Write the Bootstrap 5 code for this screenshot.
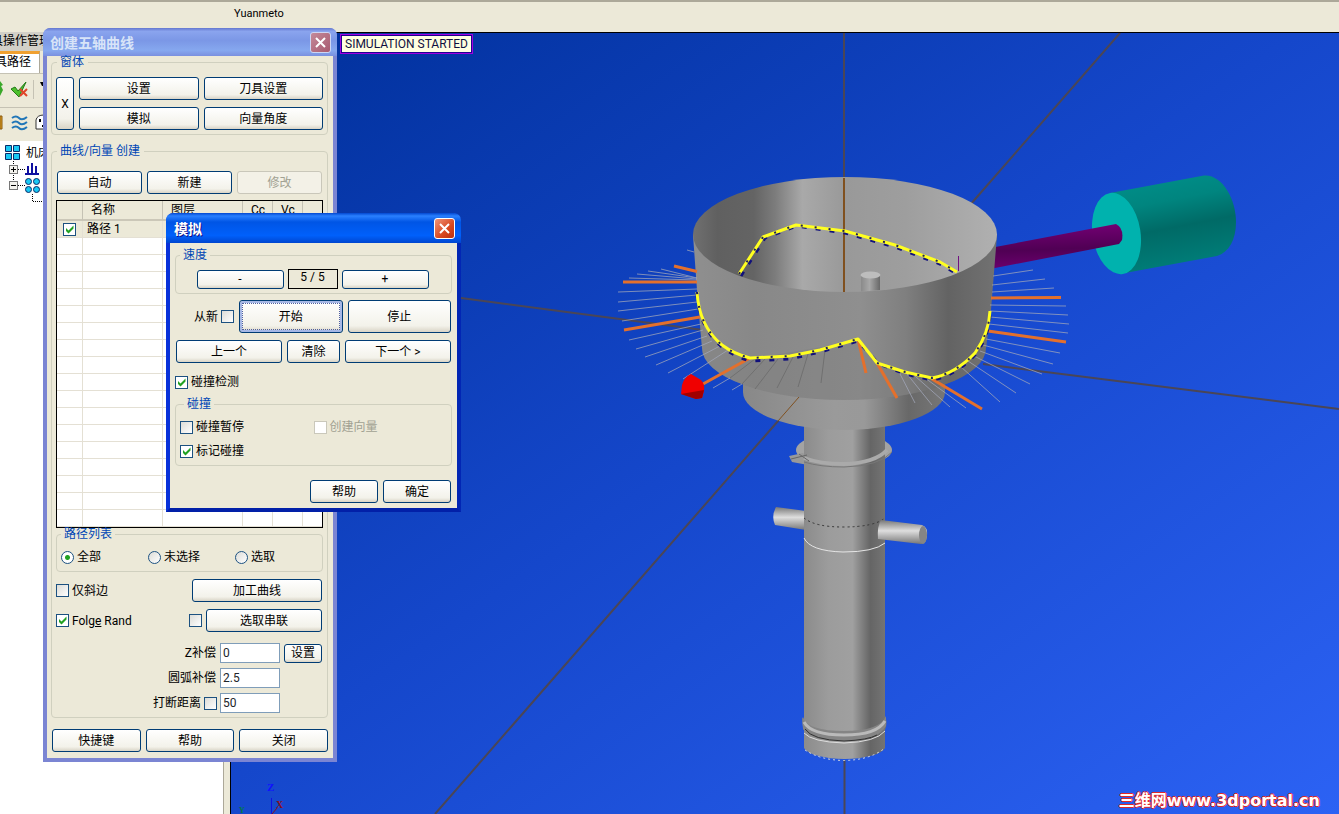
<!DOCTYPE html>
<html lang="zh-CN">
<head>
<meta charset="utf-8">
<meta name="viewport" content="width=device-width, initial-scale=1">
<title>创建五轴曲线</title>
<link href="https://cdn.jsdelivr.net/npm/bootstrap@5.3.0/dist/css/bootstrap.min.css" rel="stylesheet">
<style>
:root{--face:#ece9d8;--ink:#000;--edge:#003c74}
body{font-family:Roboto,"Noto Sans CJK SC",sans-serif;font-size:12px;line-height:16px;color:var(--ink);background:var(--face)}
.topbar{height:32px;border-top:2px solid #aca899;background:var(--face);padding:4px 0 0 234px;font-size:11px}
.side{width:224px;background:#fff;border-right:1px solid #aca899}
.side-title{height:19px;background:#d2d0c8;overflow:hidden;white-space:nowrap;padding-top:1px}
.side-title span{margin-left:-9px}
.side-tabs{height:22px;background:var(--face)}
.side-tab{width:40px;border-top:3px solid #f0a030;border-right:1px solid #aca899;background:#fff;overflow:hidden;white-space:nowrap;color:#000;text-decoration:none}
.side-tab span{margin-left:-5px}
.tools{background:var(--face);border-top:1px solid #c5c2b4;height:34px;overflow:hidden}
.tree{list-style:none}
.splitter{width:6px;background:var(--face)}
.view{border-left:1px solid #000;border-top:1px solid #000;background:linear-gradient(145deg,#00309a 0%,#1547cb 48%,#2c62f4 100%);overflow:hidden}
.status{top:1px;left:109px;border:1px solid #a000e0;box-shadow:inset 0 0 0 1px #200090;background:#ffffe1;padding:1px 4px;color:#101040}
.stamp{right:19px;bottom:4px;font-family:"DejaVu Sans","Noto Sans CJK SC",sans-serif;font-size:16px;line-height:18px;font-weight:700;color:#fff;text-decoration:none;text-shadow:1px 0 #e02828,-1px 0 #e02828,0 1px #e02828,0 -1px #e02828}
.win{background:var(--face);border-radius:8px 8px 0 0}
.win-head{font-weight:700;font-size:14px;line-height:20px;border-radius:7px 7px 0 0}
.win-head h1{font-size:14px;line-height:20px;font-weight:700}
.win-a{left:43px;top:28px;width:294px;border:4px solid #7b85d3;border-top:0}
.win-a .win-head{margin:0 -4px;height:28px;padding:1px 6px 0 7px;background:linear-gradient(#6477cf,#8aa4ee 12%,#7b97e6 45%,#86a8ef 80%,#7a90df);color:#d8e4f8}
.win-a .win-body{padding:0 5px 6px 4px}
.win-b{left:166px;top:213px;width:295px;border:4px solid #0831d9;border-top:0;border-right-color:#0226b4;border-bottom-color:#0220a8}
.win-b .win-head{margin:0 -4px;height:30px;padding:1px 6px 0 8px;background:linear-gradient(#0348d0,#2a80ff 10%,#0055e5 30%,#0060fb 75%,#0046cf);color:#fff;text-shadow:1px 1px #0f1089}
.win-b .win-body{padding:6px 5px 5px}
.x-btn{width:21px;height:21px;padding:0;border:1px solid #fff;border-radius:3px;background:linear-gradient(135deg,#f0957a,#d84820 60%,#b83010);display:flex;align-items:center;justify-content:center}
.win-a .x-btn{background:linear-gradient(135deg,#c48a9a,#a85a70);border-color:#ccd6f4}
.xp{--bs-btn-padding-y:0;--bs-btn-padding-x:0;font-size:12px;line-height:16px;min-height:23px;border:1px solid var(--edge);border-radius:3px;background:linear-gradient(#fff,#f3f2ea 80%,#d9d4c6);color:#000}
.xp:hover{border-color:var(--edge);color:#000;background:#fbfaf4}
.xp:disabled{border-color:#c9c7ba;background:#f3f1e7;color:#a1a192;opacity:1}
.xp-low{min-height:19px}
.xp-tall{min-height:33px}
.xp-focus{box-shadow:inset 0 0 0 2px #a6b8e6;outline:1px dotted #5060a0;outline-offset:-4px}
.grp{border:1px solid #d0d0bf;border-radius:4px;min-width:0}
.grp>legend{float:none;width:auto;font-size:12px;line-height:12px;margin:0 0 0 4px;padding:0 3px;color:#0046b5}
.grp.outer-grp>legend{margin-left:1px;padding:0 4px 0 3px}
.g5{gap:5px}.g4{gap:4px}.g3{gap:3px}.g7{gap:7px}
.form-check-input.tick{width:13px;height:13px;margin:0;flex:none;border:1px solid #1c5180;border-radius:0;background-color:#fff;background-image:linear-gradient(135deg,#dcdcd7,#fff)}
.form-check-input.tick:checked{background-color:#fff;border-color:#1c5180;background-size:11px 11px;background-image:url("data:image/svg+xml,%3Csvg xmlns='http://www.w3.org/2000/svg' viewBox='0 0 11 11'%3E%3Cpath d='M2 4v3l2.500 2.500 5-5v-3l-5 5z' fill='%2321a121'/%3E%3C/svg%3E")}
.form-check-input.tick:disabled{border-color:#cac8bb;background:#fff;opacity:1}
.form-check-input.dot{width:13px;height:13px;margin:0;flex:none;border:1px solid #1c5180;background-color:#fff;background-image:linear-gradient(135deg,#dcdcd7,#fff)}
.form-check-input.dot:checked{background-color:#fff;border-color:#1c5180;background-image:radial-gradient(circle,#21a121 0 2px,#fff 3px)}
.off{color:#a1a192}
.fld{width:60px;height:20px;border:1px solid #7f9db9;border-radius:0;padding:0 2px;font-size:12px;line-height:16px;min-height:0}
.paths{table-layout:fixed;border:1px solid #000;border-collapse:separate;border-spacing:0;background:#fff}
.paths th{height:20px;background:var(--face);font-weight:400;padding:0 0 0 8px;border-bottom:2px solid #cbc7b8;border-right:1px solid #c5c2b4;overflow:hidden;white-space:nowrap;line-height:16px}
.paths th:last-child,.paths td:last-child{border-right:0}
.paths td{height:17px;padding:0 0 0 4px;border-right:1px solid #e4e0d4;border-bottom:1px solid #e4e0d4;line-height:16px}
.paths .picked td{background:var(--face)}
.path-tick{margin-left:2px !important;display:block}
.speed{border:1px solid #000;width:50px;height:20px;line-height:15px}
.x-tall{width:18px}
.win-row{padding:9px 0 0}
.win-grid{display:grid;grid-template-columns:1fr 1fr;gap:7px 5px}
.win-grid>.col{width:auto}
.create{margin-top:10px}
.auto-row{padding:14px 1px 6px}
.radios{display:grid;grid-template-columns:87px 87px 1fr;padding:9px 4px 6px}
.opts{padding:7px 1px 0 0}
.curve-btn{width:130px}.chain-btn{width:116px}.set-btn{width:38px}
.offsets{padding:11px 1px 0 0}
.short{padding-right:42px}
.foot{padding:11px 0 0 1px}
.step-btn{width:87px}
.speed-row{padding:8px 2px 0 0}
.again{width:59px}
.run-row{padding:6px 1px 0 0}
.run-row .flex-fill,.nav-row .flex-fill{flex-basis:0 !important}
.nav-row{padding:7px 1px 0}
.clear-btn{width:53px}
.detect{padding-top:11px}
.hit{margin-top:8px;padding:9px 4px 6px}
.end-row{padding:14px 1px 0}
.end-btn{width:68px}
</style>
</head>
<body class="d-flex flex-column min-vh-100 overflow-hidden position-relative">
<header class="topbar">Yuanmeto</header>

<main class="d-flex flex-grow-1">
  <aside class="side flex-shrink-0">
    <div class="side-title"><span>具操作管理</span></div>
    <nav class="side-tabs d-flex"><a class="side-tab" href="#"><span>具路径</span></a></nav>
    <div class="tools">
      <svg width="44" height="32" viewBox="0 75 44 32"><path d="M0 82l3 4-2 1 2 4-3 6z" fill="#39a829"/><path d="M11 90l4-2 3 4 8-9-7 15z" fill="#4cc02c" stroke="#237a18"/><path d="M20 90l7 7m0-7l-7 7" stroke="#e04428" stroke-width="2"/><path d="M33.500 81v19" stroke="#c5c2b4"/><path d="M40 83h4v4h-2z"/></svg>
    </div>
    <div class="tools">
      <svg width="44" height="32" viewBox="0 107 44 32"><path d="M0 115h2v13h-2z" fill="#e0a020" stroke="#8a5a10"/><path d="M12 117q4-3 7 0t8-1M12 122q4-3 7 0t8-1M12 127q4-3 7 0t8-1" fill="none" stroke="#2277b8" stroke-width="2"/><path d="M36 128v-9q1-5 8-5v14z" fill="#fff" stroke="#333"/><path d="M39 118h2v3h-2zM42 124h2v2h-2z"/></svg>
    </div>
    <ul class="tree m-0 px-0 pt-1">
      <li class="d-flex align-items-center"><svg width="26" height="16" viewBox="0 144 26 16"><path d="M5.500 144.500h6v6h-6zM13.500 144.500h6v6h-6zM5.500 152.500h6v6h-6zM13.500 152.500h6v6h-6z" fill="#19c8f4" stroke="#082a68"/></svg>机床</li>
      <li class="d-flex"><svg width="43" height="16" viewBox="0 160 43 16"><path d="M13.500 160v16M18 168.500h7" stroke="#000" stroke-dasharray="1 1"/><rect x="9.500" y="164.500" width="8" height="8" fill="#f4f3ee" stroke="#777"/><path d="M11 168.500h5M13.500 166v5" stroke="#000"/><path d="M25 173h14M28 165v7M32 162v10M36 165v7" stroke="#1010a0" stroke-width="2"/></svg></li>
      <li class="d-flex"><svg width="43" height="26" viewBox="0 176 43 26"><path d="M13.500 176v4M18 184.500h7M32.500 193v7.500H43" fill="none" stroke="#000" stroke-dasharray="1 1"/><rect x="9.500" y="180.500" width="8" height="8" fill="#f4f3ee" stroke="#777"/><path d="M11 184.500h5" stroke="#000"/><g fill="#19c8f4" stroke="#082a68"><circle cx="28.500" cy="180.500" r="3"/><circle cx="36.500" cy="180.500" r="3"/><circle cx="28.500" cy="188.500" r="3"/><circle cx="36.500" cy="188.500" r="3"/></g></svg></li>
    </ul>
  </aside>
  <div class="splitter flex-shrink-0"></div>

  <section class="view position-relative flex-grow-1">
    <svg class="position-absolute top-0 start-0 w-100 h-100" viewBox="231 33 1108 781" preserveAspectRatio="xMidYMid slice" aria-label="3D">
      <defs>
        <linearGradient id="inner" gradientUnits="userSpaceOnUse" x1="693" x2="997" y1="0" y2="0"><stop offset="0" stop-color="#707070"/><stop offset=".08" stop-color="#606060"/><stop offset=".2" stop-color="#646464"/><stop offset=".27" stop-color="#7c7c7c"/><stop offset=".36" stop-color="#a9a9a9"/><stop offset=".5" stop-color="#999"/><stop offset=".7" stop-color="#9e9e9e"/><stop offset="1" stop-color="#b0b0b0"/></linearGradient>
        <linearGradient id="outer" gradientUnits="userSpaceOnUse" x1="693" x2="997" y1="0" y2="0"><stop offset="0" stop-color="#8f8f8f"/><stop offset=".2" stop-color="#888"/><stop offset=".55" stop-color="#8f8f8f"/><stop offset=".7" stop-color="#7f7f7f"/><stop offset=".84" stop-color="#636363"/><stop offset="1" stop-color="#727272"/></linearGradient>
        <linearGradient id="flange" gradientUnits="userSpaceOnUse" x1="743" x2="945" y1="0" y2="0"><stop offset="0" stop-color="#888"/><stop offset=".45" stop-color="#9a9a9a"/><stop offset=".6" stop-color="#999"/><stop offset=".82" stop-color="#686868"/><stop offset="1" stop-color="#777"/></linearGradient>
        <linearGradient id="stem" gradientUnits="userSpaceOnUse" x1="804" x2="885" y1="0" y2="0"><stop offset="0" stop-color="#8b8b8b"/><stop offset=".3" stop-color="#9c9c9c"/><stop offset=".6" stop-color="#a0a0a0"/><stop offset=".66" stop-color="#8f8f8f"/><stop offset=".82" stop-color="#656565"/><stop offset="1" stop-color="#747474"/></linearGradient>
        <linearGradient id="pin" x1="0" x2="0" y1="0" y2="1"><stop offset="0" stop-color="#777"/><stop offset=".45" stop-color="#dedede"/><stop offset="1" stop-color="#777"/></linearGradient>
        <linearGradient id="stub"><stop offset="0" stop-color="#8a8a8a"/><stop offset=".45" stop-color="#a8a8a8"/><stop offset="1" stop-color="#686868"/></linearGradient>
        <linearGradient id="teal" x1="0" x2=".25" y1="0" y2="1"><stop offset="0" stop-color="#00918c"/><stop offset=".35" stop-color="#00857f"/><stop offset=".62" stop-color="#006a66"/><stop offset="1" stop-color="#007d78"/></linearGradient>
        <linearGradient id="rod" x1="0" x2=".1" y1="0" y2="1"><stop offset="0" stop-color="#780078"/><stop offset=".6" stop-color="#500054"/><stop offset="1" stop-color="#6b006d"/></linearGradient>
      </defs>
      <g stroke="#4b4655" stroke-width="2" fill="none">
        <path d="M844 33V180M1120 33L970 205M461 298L703 330M983 364L1339 409M799 397L435 814M844.500 760V814"/>
      </g>
      <!-- tool holder -->
      <path d="M1110 193L1204 175.500C1222 174 1236 199 1236 222C1236 240 1229 252 1217 256L1125 273z" fill="url(#teal)"/>
      <ellipse cx="1116.500" cy="233.500" rx="24" ry="41" transform="rotate(-9 1116.500 233.500)" fill="#00b2ae"/>
      <path d="M990 248L1116 224Q1124 228 1122 240L1119 244L990 269z" fill="url(#rod)"/>
      <!-- stem -->
      <ellipse cx="844" cy="450" rx="48" ry="17" fill="#a3a3a3"/>
      <path d="M789 456l14-3 8 7-3 5-16-3z" fill="#999"/>
      <path d="M776 507L806 511V530L775 525Q771 516 776 507z" fill="url(#pin)"/>
      <path d="M804 420V717Q801 722 804 730V748A41 13 0 0 0 885 748V730Q888 722 885 717V420z" fill="url(#stem)"/>
      <path d="M804 458Q820 464 844 464Q875 463 887 450" fill="none" stroke="#aaa" stroke-width="4"/><path d="M804 462Q820 467 844 467Q880 466 892 452" fill="none" stroke="#777"/>
      <path d="M791 459l16-4M799 454l10 7" stroke="#666" fill="none"/>
      <path d="M804 518Q815 527 843 527Q874 527 885 518" fill="none" stroke="#333" stroke-dasharray="2 3"/>
      <path d="M804 538Q810 551 843 552Q874 552 885 543" fill="none" stroke="#e5e5e5" stroke-width="1"/>
      <path d="M881 520L922 525Q928 527 927 536Q926 544 921 544L878 539Q877 526 881 520z" fill="url(#pin)"/><ellipse cx="923" cy="535" rx="4" ry="9" fill="#858585"/>
      <path d="M802 717Q808 731 844 731Q880 731 886 716L886 726Q878 741 844 741Q810 741 803 729z" fill="#858585"/><path d="M804 722Q811 735 844 735Q877 735 885 721" fill="none" stroke="#bababa" stroke-width="3"/>
      <path d="M804 733Q812 742 844 743Q876 742 885 731" fill="none" stroke="#ddd"/><path d="M805 729Q812 740 844 741Q868 740 877 735" fill="none" stroke="#333"/>
      <path d="M805 750Q820 760 844 760.500Q870 760 885 748" fill="none" stroke="#ddd" stroke-dasharray="2 3"/>
      <!-- bowl -->
      <path d="M743 380V392A101 38 0 0 0 945 392V375z" fill="url(#flange)"/>
      <path d="M693 235L697 290L702 348A142 52 0 0 0 986 348L991 310L997 235z" fill="url(#outer)"/>
      <path d="M699 318Q710 345 750 359L858 341L877 364L932 379Q980 366 988 328L986 348A142 52 0 0 1 702 348z" fill="#777" opacity=".28"/>
      <ellipse cx="845" cy="234.500" rx="152" ry="57.500" fill="url(#inner)"/>
      <path d="M861 276V291.500L880 290V276z" fill="url(#stub)"/><ellipse cx="870.500" cy="275" rx="10" ry="3.500" fill="#bdbdbd"/>
      <path d="M844 178V292" stroke="#80501f" stroke-width="2"/><path d="M799 397L778 421" stroke="#80501f"/>
      <path d="M958.500 256V271" stroke="#701080"/>
      <!-- vectors -->
      <g stroke="#a3a8ba" stroke-width="1" opacity=".75"><path d="M687 250L694 252M661 269L697 278M648 271L697 278M637 274L697 279M629 278L697 280M618 292L697 289M618 302L697 295M618 311L697 302M622 321L698 309M629 340L701 324M636 349L703 330M645 357L707 336M656 365L712 341M668 373L720 346M683 379L728 350M713 388L730 378M732 390L742 384M1033 270L993 276M1045 279L992 285M1054 288L992 292M1066 306L990 305M1068 315L990 311M1069 324L990 317M1068 333L989 324M1060 353L986 339M1053 364L983 345M1042 374L980 351M1030 384L974 356M1016 393L968 361M1000 402L960 366M966 408L925 378M950 407L915 376M932 405L907 374M915 403L898 370"/></g>
      <path d="M730 378L755 359M742 384L765 359M755 389L778 359M777 388L793 357M798 387L808 354M821 383L825 350" stroke="#707070"/>
      <path d="M674 266L697 271.500M623 282H697M624 330L700 317M750 358L703 384M858 339L866 373M877 363L897 398M932 379L982 409M988 331L1066 342M991 298L1061 297.500" stroke="#e4702c" stroke-width="3" fill="none"/>
      <g fill="none" stroke-linejoin="round">
        <path d="M741 276L765 238L797 226L845 233L895 247L940 264L957 274M697 293Q699 328 722 347Q734 356 750 361L790 359L820 352L858 341L879 364L905 374L932 380Q955 376 976 354Q990 334 990 312" stroke="#10107c" stroke-width="3" stroke-dasharray="5 9"/>
        <path d="M739 274L763 237L796 225L845 231L895 245L940 262L957 272M697 292Q699 326 722 345Q734 354 750 358L790 356L820 350L858 339L877 363L905 372L932 378Q955 374 975 353Q989 333 990 311" stroke="#ffff20" stroke-width="3"/>
        <path d="M739 274L763 237L796 225L845 231L895 245L940 262L957 272M697 292Q699 326 722 345Q734 354 750 358L790 356L820 350L858 339M877 363L905 372L932 378Q955 374 975 353Q989 333 990 311" stroke="#20205c" stroke-width="2" stroke-dasharray="2 12"/>
      </g>
      <path d="M691 374L701 380Q705 384 704 391L702 398L696 399L681 394L682 385Q684 377 691 374z" fill="#f00000"/><path d="M681 394L704 390L702 398L696 399z" fill="#a00000"/>
      <g font-family="Liberation Serif, serif" font-weight="700"><text x="267" y="791" font-size="11" fill="#1010ff">Z</text><text x="276" y="808" font-size="10" fill="#8b0f1c">X</text><text x="239" y="813" font-size="8" fill="#007848">Y</text></g>
      <path d="M271.500 798V814" stroke="#1010e0"/><path d="M277 808L272 814" stroke="#8b0f1c"/>
    </svg>
    <div class="status position-absolute">SIMULATION STARTED</div>
    <a class="stamp position-absolute" href="#">三维网www.3dportal.cn</a>
  </section>
</main>

<form class="win win-a position-absolute" onsubmit="return false">
  <div class="win-head d-flex align-items-center justify-content-between"><h1 class="m-0">创建五轴曲线</h1>
    <button class="x-btn" type="button" aria-label="关闭"><svg width="13" height="13" viewBox="0 0 13 13"><path d="M2 2l9 9m0-9l-9 9" stroke="#fff" stroke-width="2"/></svg></button></div>
  <div class="win-body">
    <fieldset class="grp outer-grp px-1 pb-1"><legend>窗体</legend>
      <div class="d-flex g5 win-row">
        <button class="btn xp x-tall" type="button">X</button>
        <div class="row row-cols-2 flex-grow-1 m-0 win-grid">
          <div class="col p-0"><button class="btn xp w-100" type="button">设置</button></div>
          <div class="col p-0"><button class="btn xp w-100" type="button">刀具设置</button></div>
          <div class="col p-0"><button class="btn xp w-100" type="button">模拟</button></div>
          <div class="col p-0"><button class="btn xp w-100" type="button">向量角度</button></div>
        </div>
      </div>
    </fieldset>
    <fieldset class="grp outer-grp px-1 pb-1 create"><legend>曲线/向量 创建</legend>
      <div class="d-flex g5 auto-row">
        <button class="btn xp w-100" type="button">自动</button><button class="btn xp w-100" type="button">新建</button><button class="btn xp w-100" type="button" disabled>修改</button>
      </div>
      <table class="paths w-100">
        <colgroup><col style="width:26px"><col style="width:80px"><col style="width:80px"><col style="width:30px"><col style="width:30px"><col></colgroup>
        <thead><tr><th></th><th>名称</th><th>图层</th><th>Cc</th><th>Vc</th><th></th></tr></thead>
        <tbody>
          <tr class="picked"><td><input class="form-check-input tick path-tick" type="checkbox" checked aria-label="路径 1"></td><td>路径 1</td><td></td><td></td><td></td><td></td></tr>
          <tr><td></td><td></td><td></td><td></td><td></td><td></td></tr><tr><td></td><td></td><td></td><td></td><td></td><td></td></tr>
          <tr><td></td><td></td><td></td><td></td><td></td><td></td></tr><tr><td></td><td></td><td></td><td></td><td></td><td></td></tr>
          <tr><td></td><td></td><td></td><td></td><td></td><td></td></tr><tr><td></td><td></td><td></td><td></td><td></td><td></td></tr>
          <tr><td></td><td></td><td></td><td></td><td></td><td></td></tr><tr><td></td><td></td><td></td><td></td><td></td><td></td></tr>
          <tr><td></td><td></td><td></td><td></td><td></td><td></td></tr><tr><td></td><td></td><td></td><td></td><td></td><td></td></tr>
          <tr><td></td><td></td><td></td><td></td><td></td><td></td></tr><tr><td></td><td></td><td></td><td></td><td></td><td></td></tr>
          <tr><td></td><td></td><td></td><td></td><td></td><td></td></tr><tr><td></td><td></td><td></td><td></td><td></td><td></td></tr>
          <tr><td></td><td></td><td></td><td></td><td></td><td></td></tr><tr><td></td><td></td><td></td><td></td><td></td><td></td></tr>
          <tr><td></td><td></td><td></td><td></td><td></td><td></td></tr>
        </tbody>
      </table>
      <fieldset class="grp"><legend>路径列表</legend>
        <div class="radios">
          <label class="d-flex align-items-center g3"><input class="form-check-input dot" type="radio" name="list" checked>全部</label>
          <label class="d-flex align-items-center g3"><input class="form-check-input dot" type="radio" name="list">未选择</label>
          <label class="d-flex align-items-center g3"><input class="form-check-input dot" type="radio" name="list">选取</label>
        </div>
      </fieldset>
      <div class="d-flex flex-column g7 opts">
        <div class="d-flex align-items-center justify-content-between">
          <label class="d-flex align-items-center g3"><input class="form-check-input tick" type="checkbox">仅斜边</label>
          <button class="btn xp curve-btn" type="button">加工曲线</button>
        </div>
        <div class="d-flex align-items-center">
          <label class="d-flex align-items-center g3 me-auto"><input class="form-check-input tick" type="checkbox" checked><span>Folg<u>e</u> Rand</span></label>
          <input class="form-check-input tick me-1" type="checkbox" aria-label="选取串联">
          <button class="btn xp chain-btn" type="button">选取串联</button>
        </div>
      </div>
      <div class="d-flex flex-column g5 offsets">
        <div class="d-flex align-items-center justify-content-end g4"><label for="zoff">Z补偿</label><input class="form-control fld" id="zoff" type="text" value="0"><button class="btn xp xp-low set-btn" type="button">设置</button></div>
        <div class="d-flex align-items-center justify-content-end g4 short"><label for="arc">圆弧补偿</label><input class="form-control fld" id="arc" type="text" value="2.5"></div>
        <div class="d-flex align-items-center justify-content-end g3 short"><label for="brk">打断距离</label><input class="form-check-input tick" type="checkbox" aria-label="打断距离"><input class="form-control fld" id="brk" type="text" value="50"></div>
      </div>
    </fieldset>
    <div class="d-flex g5 foot">
      <button class="btn xp w-100" type="button">快捷键</button><button class="btn xp w-100" type="button">帮助</button><button class="btn xp w-100" type="button">关闭</button>
    </div>
  </div>
</form>

<form class="win win-b position-absolute" onsubmit="return false">
  <div class="win-head d-flex align-items-center justify-content-between"><h1 class="m-0">模拟</h1>
    <button class="x-btn" type="button" aria-label="关闭"><svg width="13" height="13" viewBox="0 0 13 13"><path d="M2 2l9 9m0-9l-9 9" stroke="#fff" stroke-width="2"/></svg></button></div>
  <div class="win-body">
    <fieldset class="grp pb-1"><legend>速度</legend>
      <div class="d-flex g4 justify-content-center align-items-center speed-row">
        <button class="btn xp xp-low step-btn" type="button">-</button><output class="speed text-center">5 / 5</output><button class="btn xp xp-low step-btn" type="button">+</button>
      </div>
    </fieldset>
    <div class="d-flex align-items-center g5 run-row">
      <label class="d-flex align-items-center justify-content-end g3 again">从新<input class="form-check-input tick" type="checkbox"></label>
      <button class="btn xp xp-tall xp-focus flex-fill" type="button">开始</button><button class="btn xp xp-tall flex-fill" type="button">停止</button>
    </div>
    <div class="d-flex g5 nav-row">
      <button class="btn xp flex-fill" type="button">上一个</button><button class="btn xp clear-btn" type="button">清除</button><button class="btn xp flex-fill" type="button">下一个 &gt;</button>
    </div>
    <label class="d-flex align-items-center g3 detect"><input class="form-check-input tick" type="checkbox" checked>碰撞检测</label>
    <fieldset class="grp hit"><legend>碰撞</legend>
      <div class="row g-0">
        <div class="col-6"><label class="d-flex align-items-center g3"><input class="form-check-input tick" type="checkbox">碰撞暂停</label></div>
        <div class="col-6"><label class="d-flex align-items-center g3 off"><input class="form-check-input tick" type="checkbox" disabled>创建向量</label></div>
      </div>
      <label class="d-flex align-items-center g3 mt-2"><input class="form-check-input tick" type="checkbox" checked>标记碰撞</label>
    </fieldset>
    <div class="d-flex g5 justify-content-end end-row">
      <button class="btn xp end-btn" type="button">帮助</button><button class="btn xp end-btn" type="button">确定</button>
    </div>
  </div>
</form>

<script src="https://cdn.jsdelivr.net/npm/bootstrap@5.3.0/dist/js/bootstrap.bundle.min.js"></script>
</body>
</html>
